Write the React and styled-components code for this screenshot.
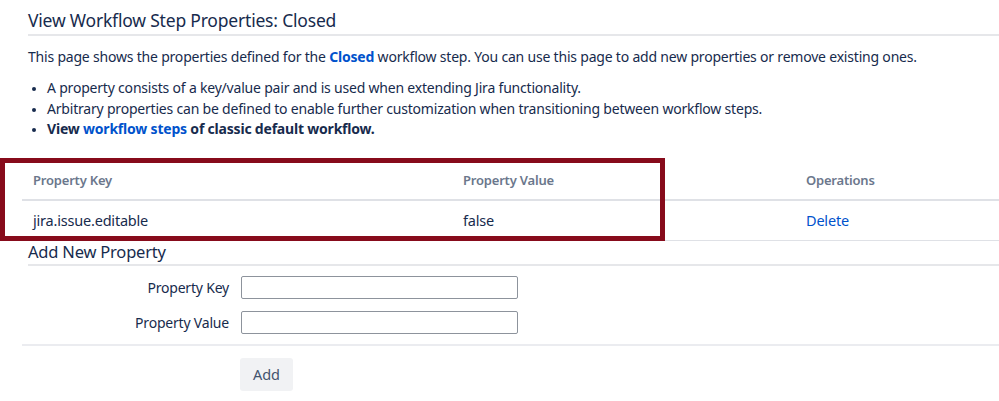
import React from 'react';
import styled, { createGlobalStyle } from 'styled-components';

const GlobalStyle = createGlobalStyle`
  html, body {
    margin: 0;
    padding: 0;
    background: #fff;
  }
  body {
    font-family: "Noto Sans", "Open Sans", sans-serif;
    color: #172b4d;
    font-size: 14px;
    letter-spacing: -0.2px;
  }
`;

const Page = styled.div`
  position: relative;
  width: 999px;
  height: 401px;
  overflow: hidden;
  padding: 8px 0 0 22px;
  box-sizing: border-box;
`;

const Heading = styled.h2`
  margin: 0 0 0 6px;
  font-size: ${(p) => p.size || 18}px;
  font-weight: 400;
  color: #172b4d;
  line-height: ${(p) => p.lh || 25}px;
  border-bottom: 2px solid #e6e7ea;
  padding-bottom: 1px;
`;

const Intro = styled.p`
  margin: 11px 0 0 6px;
  line-height: 20px;
`;

const Bullets = styled.ul`
  margin: 11px 0 0 6px;
  padding-left: 19px;
  line-height: 20.5px;
  li::marker {
    font-size: 12px;
  }
`;

const Link = styled.a`
  color: #0052cc;
  text-decoration: none;
  font-weight: ${(p) => (p.bold ? 700 : 'inherit')};
`;

const Table = styled.table`
  margin-top: 19px;
  width: 977px;
  table-layout: fixed;
  border-collapse: collapse;
  th, td {
    text-align: left;
    padding: 0 11px;
  }
  th {
    height: 38px;
    font-size: 13px;
    font-weight: 600;
    color: #6b778c;
    border-bottom: 2px solid #dfe1e6;
    padding-top: 2px;
  }
  td {
    height: 39px;
    border-bottom: 1px solid #dfe1e6;
    font-size: 14.5px;
  }
`;

const Highlight = styled.div`
  position: absolute;
  left: 0;
  top: 158px;
  width: 665px;
  height: 83px;
  border: 5px solid #870b1b;
  box-sizing: border-box;
  pointer-events: none;
`;

const Form = styled.form`
  margin-top: 0;
`;

const FieldList = styled.div`
  display: flex;
  flex-direction: column;
  gap: 12px;
  padding: 10px 0;
  border-bottom: 2px solid #ebecf0;
`;

const Field = styled.div`
  display: grid;
  grid-template-columns: 207px 277px;
  column-gap: 12px;
  align-items: center;
`;

const Label = styled.label`
  text-align: right;
  font-size: 14px;
`;

const Input = styled.input`
  height: 23px;
  box-sizing: border-box;
  border: 1px solid #8d939c;
  border-radius: 2px;
  padding: 2px 4px;
  font: inherit;
`;

const Actions = styled.div`
  padding: 12px 0 0 218px;
`;

const Button = styled.button`
  width: 53px;
  height: 33px;
  border: none;
  border-radius: 3px;
  background: #f1f2f4;
  color: #42526e;
  font-family: inherit;
  font-size: 14.5px;
  cursor: pointer;
`;

const App = () => (
  <>
    <GlobalStyle />
    <Page>
      <Heading size={17.5}>View Workflow Step Properties: Closed</Heading>
      <Intro>
        This page shows the properties defined for the <Link bold>Closed</Link> workflow step. You can use
        this page to add new properties or remove existing ones.
      </Intro>
      <Bullets>
        <li>A property consists of a key/value pair and is used when extending Jira functionality.</li>
        <li>Arbitrary properties can be defined to enable further customization when transitioning between workflow steps.</li>
        <li>
          <b>
            View <Link>workflow steps</Link> of classic default workflow.
          </b>
        </li>
      </Bullets>
      <Table>
        <colgroup>
          <col style={{ width: 430 }} />
          <col style={{ width: 343 }} />
          <col />
        </colgroup>
        <thead>
          <tr>
            <th>Property Key</th>
            <th>Property Value</th>
            <th>Operations</th>
          </tr>
        </thead>
        <tbody>
          <tr>
            <td>jira.issue.editable</td>
            <td>false</td>
            <td>
              <Link>Delete</Link>
            </td>
          </tr>
        </tbody>
      </Table>
      <Form>
        <Heading size={16.5} lh={22}>Add New Property</Heading>
        <FieldList>
          <Field>
            <Label htmlFor="propertyKey">Property Key</Label>
            <Input id="propertyKey" type="text" />
          </Field>
          <Field>
            <Label htmlFor="propertyValue">Property Value</Label>
            <Input id="propertyValue" type="text" />
          </Field>
        </FieldList>
        <Actions>
          <Button type="button">Add</Button>
        </Actions>
      </Form>
      <Highlight />
    </Page>
  </>
);

export default App;
